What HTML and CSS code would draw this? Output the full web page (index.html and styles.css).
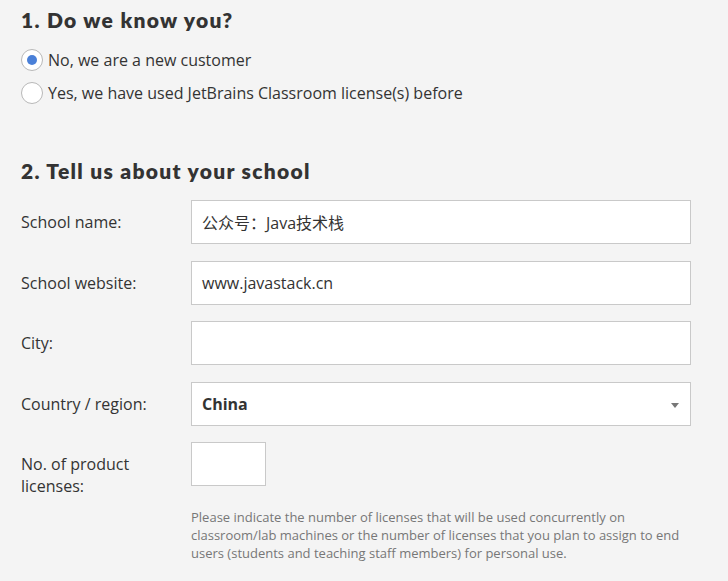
FILE: index.html
```html
<!DOCTYPE html>
<html>
<head>
<meta charset="utf-8">
<link rel="stylesheet" href="styles.css">
</head>
<body>
<div class="page">
  <h2 class="title">1. Do we know you?</h2>
  <div class="radios">
    <label class="radio"><span class="dot checked"></span>No, we are a new customer</label>
    <label class="radio"><span class="dot"></span>Yes, we have used JetBrains Classroom license(s) before</label>
  </div>
  <h2 class="title second">2. Tell us about your school</h2>
  <div class="form">
    <div class="row">
      <div class="label">School name:</div>
      <div class="field"><div class="input">公众号：Java技术栈</div></div>
    </div>
    <div class="row">
      <div class="label">School website:</div>
      <div class="field"><div class="input">www.javastack.cn</div></div>
    </div>
    <div class="row">
      <div class="label">City:</div>
      <div class="field"><div class="input"></div></div>
    </div>
    <div class="row">
      <div class="label">Country / region:</div>
      <div class="field"><div class="input select"><b>China</b><span class="caret"></span></div></div>
    </div>
    <div class="row top">
      <div class="label multi">No. of product<br>licenses:</div>
      <div class="field">
        <div class="input small"></div>
        <p class="help">Please indicate the number of licenses that will be used concurrently on classroom/lab machines or the number of licenses that you plan to assign to end users (students and teaching staff members) for personal use.</p>
      </div>
    </div>
  </div>
</div>
</body>
</html>
```

FILE: styles.css
```css
html, body {
  margin: 0;
  padding: 0;
  background: #f4f4f4;
}
body {
  font-family: "Open Sans", "Noto Sans CJK SC", sans-serif;
  color: #333;
  font-size: 16px;
}
.page {
  padding: 6px 0 0 21px;
  width: 670px;
}
.title {
  font-family: "Lato", "Open Sans", sans-serif;
  font-weight: 800;
  font-size: 21px;
  letter-spacing: 1.3px;
  color: #333;
  margin: 0;
  line-height: 28px;
}
.title.second {
  margin-top: 53px;
}
.radios {
  margin-top: 15px;
  display: flex;
  flex-direction: column;
  gap: 11px;
}
.radio {
  display: flex;
  align-items: center;
  gap: 5px;
  height: 22px;
  line-height: 22px;
  color: #333;
}
.dot {
  box-sizing: border-box;
  width: 22px;
  height: 22px;
  border: 1px solid #b8b8b8;
  border-radius: 50%;
  background: #fff;
  position: relative;
  flex: none;
}
.dot.checked::after {
  content: "";
  position: absolute;
  left: 5px;
  top: 5px;
  width: 10px;
  height: 10px;
  border-radius: 50%;
  background: #4a80d8;
}
.form {
  margin-top: 15px;
  display: flex;
  flex-direction: column;
  gap: 16.5px;
}
.row {
  display: flex;
  align-items: center;
}
.row.top {
  align-items: flex-start;
}
.label {
  width: 170px;
  flex: none;
  line-height: 22px;
}
.label.multi {
  margin-top: 11px;
  line-height: 22px;
}
.field {
  flex: none;
  width: 500px;
}
.input {
  box-sizing: border-box;
  height: 44px;
  width: 500px;
  border: 1px solid #c9c9c9;
  background: #fff;
  padding: 0 10px;
  display: flex;
  align-items: center;
  color: #333;
  position: relative;
}
.input.select b {
  font-weight: 700;
}
.caret {
  position: absolute;
  right: 11px;
  top: 20px;
  width: 0;
  height: 0;
  border-left: 4px solid transparent;
  border-right: 4px solid transparent;
  border-top: 5px solid #777;
}
.input.small {
  width: 75px;
}
.help {
  margin: 22px 0 0;
  font-size: 13px;
  line-height: 18px;
  color: #777;
  width: 500px;
}
```
